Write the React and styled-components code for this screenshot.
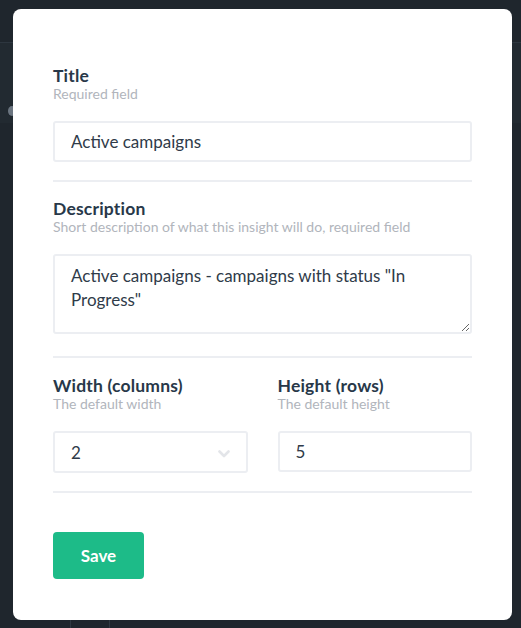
import React from "react";
import styled, { createGlobalStyle } from "styled-components";

const Global = createGlobalStyle`
  html, body { margin: 0; padding: 0; background: #1f262d; }
  body { font-family: "Lato", "Open Sans", sans-serif; -webkit-font-smoothing: antialiased; }
  * { box-sizing: border-box; }
`;

const Page = styled.div`
  position: relative;
  width: 521px;
  height: 628px;
  overflow: hidden;
  background: #1f262d;
`;

const BackHeader = styled.div`
  height: 43px;
  border-bottom: 1px solid #2d363f;
`;

const BackRow = styled.div`
  height: 80px;
  display: flex;
  align-items: center;
  padding-left: 6px;
  background: #222a31;
`;

const BackDot = styled.span`
  width: 8px;
  height: 10px;
  margin-left: 2px;
  margin-top: 56px;
  border-radius: 50%;
  background: #6b7580;
`;

const BackColumns = styled.div`
  position: absolute;
  left: 70px;
  bottom: 0;
  display: flex;
  gap: 38px;
  height: 12px;
`;

const BackLine = styled.span`
  width: 1px;
  background: #2f3841;
`;

const Modal = styled.form`
  position: absolute;
  left: 13px;
  top: 9px;
  width: 499px;
  height: 611px;
  background: #ffffff;
  border-radius: 8px;
  padding: 56px 40px 0 40px;
  display: flex;
  flex-direction: column;
`;

const Field = styled.div`
  display: flex;
  flex-direction: column;
`;

const Label = styled.label`
  font-size: 17.5px;
  line-height: 21px;
  font-weight: 700;
  letter-spacing: 0.2px;
  color: #283849;
`;

const Hint = styled.div`
  font-size: 14px;
  line-height: 16px;
  color: #b1b5bc;
  margin-bottom: 19px;
`;

const Input = styled.input`
  width: 100%;
  height: 41px;
  border: 2px solid #eceef2;
  border-radius: 3px;
  padding: 0 16px;
  font-family: inherit;
  font-size: 17px;
  color: #2f3b49;
  outline: none;
  background: #fff;
`;

const TextArea = styled.textarea`
  display: block;
  width: 100%;
  height: 80px;
  border: 2px solid #eceef2;
  border-radius: 3px;
  padding: 8px 16px;
  font-family: inherit;
  font-size: 17px;
  line-height: 24px;
  color: #2f3b49;
  resize: vertical;
  outline: none;
`;

const Divider = styled.hr`
  border: none;
  height: 2px;
  background: #eceef2;
  margin: ${(p) => p.$top || 17}px 0 ${(p) => p.$bottom || 17}px;
`;

const Row = styled.div`
  display: grid;
  grid-template-columns: 1fr 1fr;
  column-gap: 30px;
`;

const SelectBox = styled.div`
  height: 42px;
  border: 2px solid #eceef2;
  border-radius: 3px;
  display: flex;
  align-items: center;
  justify-content: space-between;
  padding: 0 16px;
  font-size: 17px;
  color: #2f3b49;
`;

const Chevron = styled.svg`
  width: 12px;
  height: 8px;
  margin-top: 4px;
`;

const Button = styled.button`
  width: 91px;
  height: 47px;
  border: none;
  border-radius: 4px;
  background: #1dbb88;
  color: #fff;
  font-family: inherit;
  font-weight: 700;
  font-size: 17px;
  cursor: pointer;
`;

export default function App() {
  return (
    <>
      <Global />
      <Page>
        <BackHeader />
        <BackRow>
          <BackDot />
        </BackRow>
        <BackColumns>
          <BackLine />
          <BackLine />
        </BackColumns>
        <Modal onSubmit={(e) => e.preventDefault()}>
          <Field>
            <Label>Title</Label>
            <Hint>Required field</Hint>
            <Input defaultValue="Active campaigns" />
          </Field>
          <Divider $top={18} $bottom={16} />
          <Field>
            <Label>Description</Label>
            <Hint>Short description of what this insight will do, required field</Hint>
            <TextArea defaultValue={'Active campaigns - campaigns with status "In Progress"'} />
          </Field>
          <Divider $top={22} />
          <Row>
            <Field>
              <Label>Width (columns)</Label>
              <Hint>The default width</Hint>
              <SelectBox>
                <span>2</span>
                <Chevron viewBox="0 0 12 8">
                  <path d="M1.5 1.5 L6 6 L10.5 1.5" fill="none" stroke="#e3e5e9" strokeWidth="2.6" strokeLinecap="round" strokeLinejoin="round" />
                </Chevron>
              </SelectBox>
            </Field>
            <Field>
              <Label>Height (rows)</Label>
              <Hint>The default height</Hint>
              <Input defaultValue="5" />
            </Field>
          </Row>
          <Divider $top={18} $bottom={39} />
          <div>
            <Button type="submit">Save</Button>
          </div>
        </Modal>
      </Page>
    </>
  );
}
